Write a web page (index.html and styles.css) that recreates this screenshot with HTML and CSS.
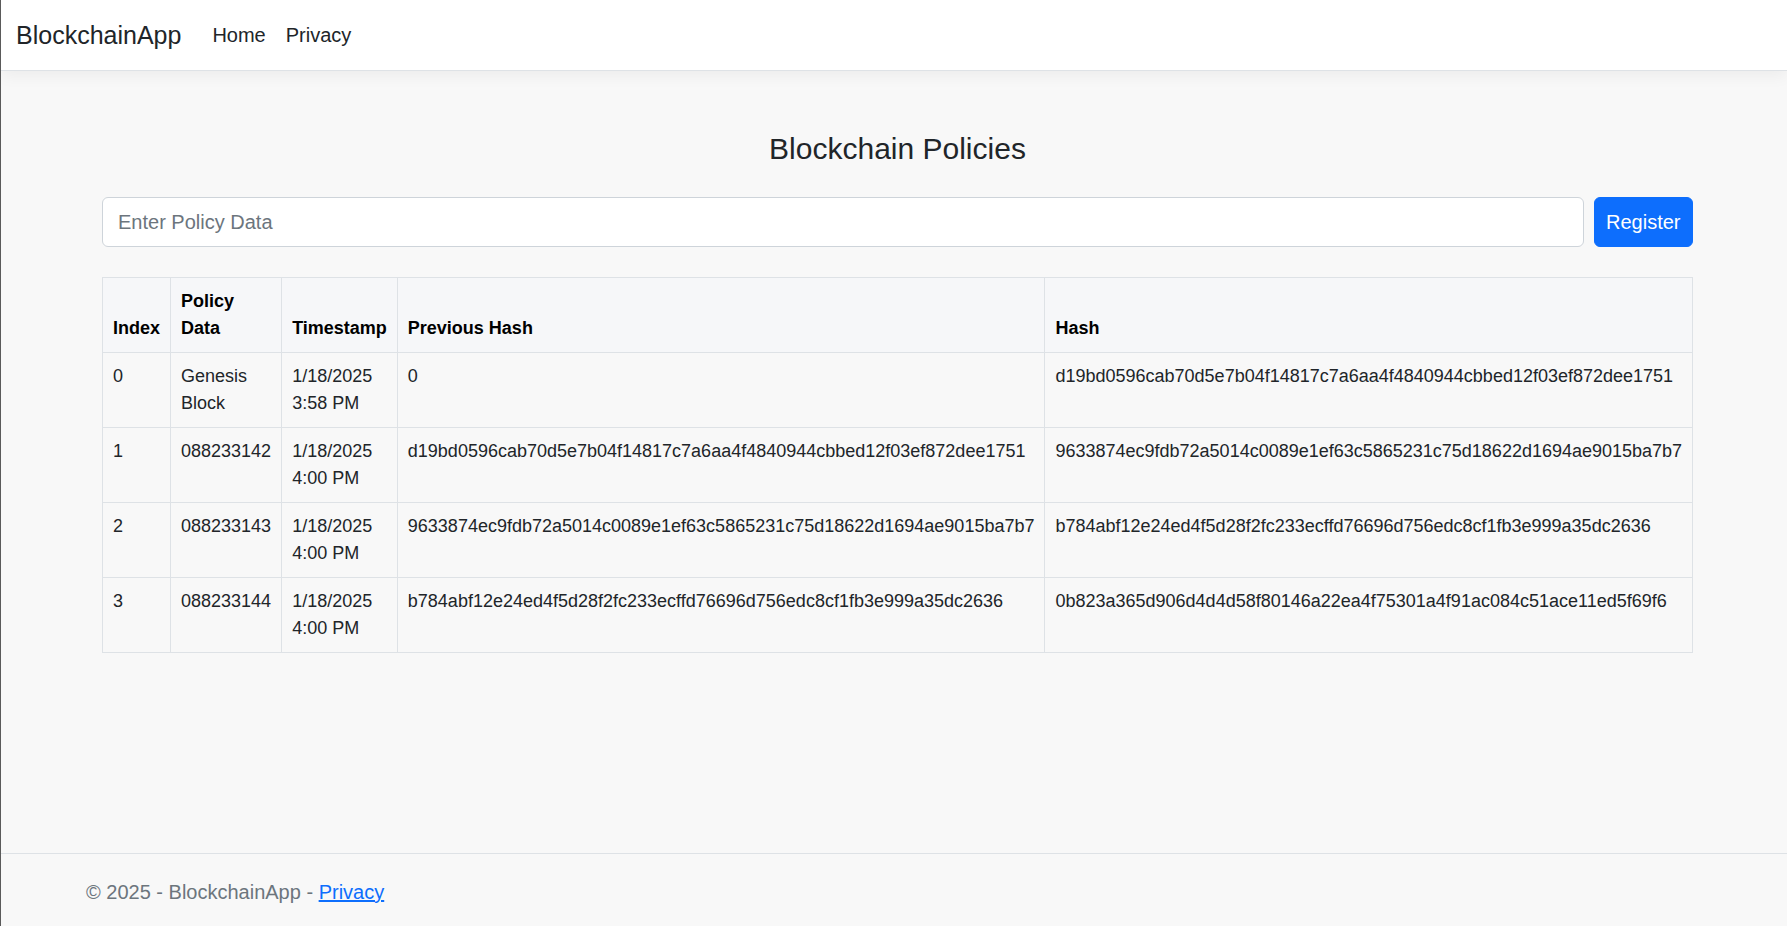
FILE: index.html
```html
<!DOCTYPE html>
<html lang="en">
<head>
<meta charset="utf-8">
<title>Blockchain Policies - BlockchainApp</title>
<link rel="stylesheet" href="styles.css">
</head>
<body>
<header class="navbar">
  <a class="brand" href="#">BlockchainApp</a>
  <nav class="nav">
    <a class="nav-link" href="#">Home</a>
    <a class="nav-link" href="#">Privacy</a>
  </nav>
</header>
<main class="main">
  <div class="container">
    <h4 class="title">Blockchain Policies</h4>
    <form class="policy-form">
      <input class="policy-input" type="text" placeholder="Enter Policy Data">
      <button class="btn-primary" type="button">Register</button>
    </form>
    <table class="chain-table">
      <thead>
        <tr>
          <th>Index</th>
          <th>Policy Data</th>
          <th>Timestamp</th>
          <th>Previous Hash</th>
          <th>Hash</th>
        </tr>
      </thead>
      <tbody>
        <tr>
          <td>0</td>
          <td>Genesis Block</td>
          <td>1/18/2025 3:58 PM</td>
          <td>0</td>
          <td>d19bd0596cab70d5e7b04f14817c7a6aa4f4840944cbbed12f03ef872dee1751</td>
        </tr>
        <tr>
          <td>1</td>
          <td>088233142</td>
          <td>1/18/2025 4:00 PM</td>
          <td>d19bd0596cab70d5e7b04f14817c7a6aa4f4840944cbbed12f03ef872dee1751</td>
          <td>9633874ec9fdb72a5014c0089e1ef63c5865231c75d18622d1694ae9015ba7b7</td>
        </tr>
        <tr>
          <td>2</td>
          <td>088233143</td>
          <td>1/18/2025 4:00 PM</td>
          <td>9633874ec9fdb72a5014c0089e1ef63c5865231c75d18622d1694ae9015ba7b7</td>
          <td>b784abf12e24ed4f5d28f2fc233ecffd76696d756edc8cf1fb3e999a35dc2636</td>
        </tr>
        <tr>
          <td>3</td>
          <td>088233144</td>
          <td>1/18/2025 4:00 PM</td>
          <td>b784abf12e24ed4f5d28f2fc233ecffd76696d756edc8cf1fb3e999a35dc2636</td>
          <td>0b823a365d906d4d4d58f80146a22ea4f75301a4f91ac084c51ace11ed5f69f6</td>
        </tr>
      </tbody>
    </table>
  </div>
</main>
<footer class="footer">
  <div class="footer-inner">&copy; 2025 - BlockchainApp - <a class="footer-link" href="#">Privacy</a></div>
</footer>
</body>
</html>
```

FILE: styles.css
```css
* { box-sizing: border-box; }

html, body { height: 100%; }

body {
  margin: 0;
  border-left: 1px solid #5a5a5a;
  background: #f8f8f8;
  color: #212529;
  font-family: "Liberation Sans", Arial, sans-serif;
  display: flex;
  flex-direction: column;
  overflow: hidden;
}

.navbar {
  height: 71px;
  background: #fff;
  border-bottom: 1px solid #dee2e6;
  box-shadow: 0 5px 15px rgba(0, 0, 0, 0.05);
  display: flex;
  align-items: center;
  padding-left: 15px;
  position: relative;
  z-index: 1;
  flex: none;
}

.brand {
  font-size: 25px;
  color: #212529;
  text-decoration: none;
  margin-right: 21px;
  line-height: 30px;
}

.nav { display: flex; }

.nav-link {
  font-size: 20px;
  color: #212529;
  text-decoration: none;
  padding: 0 10px;
  line-height: 30px;
}

.main { flex: 1; }

.container {
  width: 1591px;
  margin-left: 101px;
  padding-top: 60px;
}

.title {
  margin: 0 0 30px;
  text-align: center;
  font-size: 30px;
  font-weight: 400;
  line-height: 36px;
  color: #212529;
}

.policy-form {
  display: flex;
  gap: 10px;
  margin: 0 0 30px;
}

.policy-input {
  flex: 1;
  height: 50px;
  border: 1px solid #ced4da;
  border-radius: 6px;
  background: #fff;
  padding: 0 15px;
  font-family: "Liberation Sans", Arial, sans-serif;
  font-size: 20px;
  color: #212529;
}

.policy-input::placeholder { color: #6c757d; }

.btn-primary {
  height: 50px;
  border: 1px solid #0d6efd;
  border-radius: 6px;
  background: #0d6efd;
  color: #fff;
  font-family: "Liberation Sans", Arial, sans-serif;
  font-size: 20px;
  padding: 0 11.5px;
}

.chain-table {
  width: 100%;
  border-collapse: collapse;
  font-size: 18px;
  line-height: 27px;
}

.chain-table th,
.chain-table td {
  border: 1px solid #dee2e6;
  padding: 10px;
  text-align: left;
}

.chain-table th {
  vertical-align: bottom;
  font-weight: 700;
  color: #000;
  background: #f6f7f9;
}

.chain-table td {
  vertical-align: top;
  color: #212529;
  background: #f8f8f8;
}

.footer {
  flex: none;
  border-top: 1px solid #dee2e6;
  height: 73px;
  padding-top: 5px;
  white-space: nowrap;
}

.footer-inner {
  padding-left: 85px;
  font-size: 20px;
  line-height: 66px;
  color: #6c757d;
}

.footer-link { color: #0d6efd; }
```
